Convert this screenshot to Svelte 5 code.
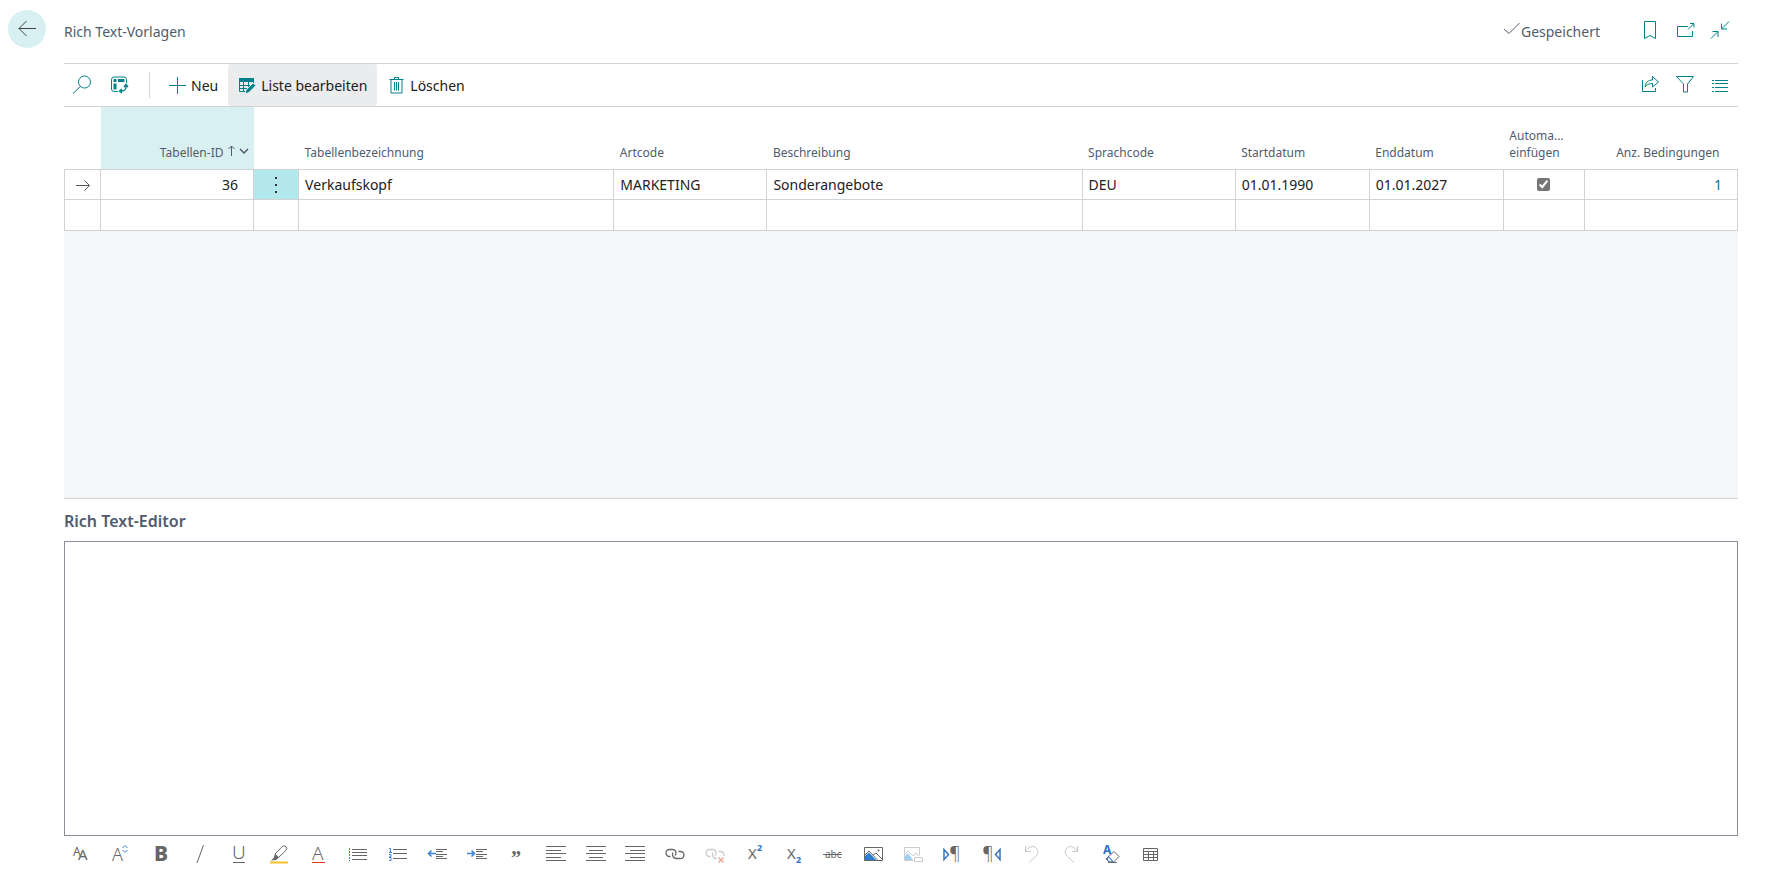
<script>
  let saved = $state(true);
  let autoInsert = $state(true);
  let content = $state('');

  const row = {
    id: '36',
    name: 'Verkaufskopf',
    type: 'MARKETING',
    description: 'Sonderangebote',
    language: 'DEU',
    start: '01.01.1990',
    end: '01.01.2027',
    conditions: '1'
  };

  const lines = (list, color = '#666') =>
    list.map(([x1, x2, y]) => `<path d="M${x1} ${y}.5H${x2}" stroke="${color}"/>`).join('');

  const link =
    '<path d="M5.5 12.5h-1A3.5 3.5 0 0 1 1 9a3.5 3.5 0 0 1 3.500-3.500h3A3.500 3.500 0 0 1 11 9c0 1-.4 1.900-1.100 2.500M8 8.500A3 3 0 0 0 7.500 10a4 4 0 0 0 3.500 4.500h4A3.500 3.500 0 0 0 19 11a3.500 3.500 0 0 0-3.500-3.500h-2" stroke-width="1.3"/>';

  const tools = [
    { label: 'Schriftart', art: '<text x="2" y="12" font-size="12">A</text><text x="7" y="16" font-size="15">A</text>' },
    { label: 'Schriftgrad', art: '<text x="2" y="17" font-size="18" class="thin">A</text><path d="M12.500 4 15 1.500 17.500 4M12.500 6 15 8.500 17.500 6" stroke="#3b82d6"/>' },
    { label: 'Fett', art: '<text x="4" y="17" font-size="21" class="heavy">B</text>' },
    { label: 'Kursiv', art: '<path d="M13.500 1 7 19"/>' },
    { label: 'Unterstrichen', art: '<text x="3" y="15" font-size="19" class="thin">U</text><path d="M4 18.500h12"/>' },
    { label: 'Texthervorhebung', art: '<path d="M6 10 13 2.800a2.600 2.600 0 0 1 4 3.600L9.500 13.500"/><path d="m6 9.500 4 4-3 2.500-5 .5 3-3Z" fill="#666" stroke="none"/><path d="M1 18.500h18" stroke="#fbc02d" stroke-width="2"/>' },
    { label: 'Schriftfarbe', art: '<text x="4" y="16" font-size="19" class="thin">A</text><path d="M4 18.500h13" stroke="#e23c22"/>' },
    { label: 'Aufzählung', art: lines([[4, 19, 5], [4, 19, 8], [4, 19, 11], [4, 19, 15]]) + '<path d="M1.500 4v13" stroke="#3b82d6" stroke-dasharray="2 1"/>' },
    { label: 'Nummerierung', art: lines([[5, 19, 5], [5, 19, 9], [5, 19, 14]]) + '<path d="M1 4.500h1.500v4M1 8.500h3M1 10.500h2v2H1.500M1 13.500h2v3H1" stroke="#3b82d6"/>' },
    { label: 'Einzug verkleinern', art: lines([[9, 20, 5], [9, 16, 7], [9, 20, 10], [9, 16, 12], [9, 20, 14]]) + '<path d="M9 9.500H2M4.500 6.500l-3 3 3 3" stroke="#3b82d6" stroke-width="1.500"/>' },
    { label: 'Einzug vergrößern', art: lines([[9, 20, 5], [9, 16, 7], [9, 20, 10], [9, 16, 12], [9, 20, 14]]) + '<path d="M0 9.500h7M4.500 6.500l3 3-3 3" stroke="#3b82d6" stroke-width="1.500"/>' },
    { label: 'Zitat', art: '<text x="5" y="21" font-size="20" class="quote">”</text>' },
    { label: 'Linksbündig', art: lines([[0, 20, 2], [0, 15, 6], [0, 20, 9], [0, 15, 13], [0, 20, 16]]) },
    { label: 'Zentriert', art: lines([[0, 20, 2], [3, 17, 6], [0, 20, 9], [3, 17, 13], [0, 20, 16]]) },
    { label: 'Rechtsbündig', art: lines([[0, 20, 2], [5, 20, 6], [0, 20, 9], [5, 20, 13], [0, 20, 16]]) },
    { label: 'Link einfügen', art: link },
    { label: 'Link entfernen', off: true, art: `<g stroke="#ccc">${link}</g><path d="M12 12h8v8h-8Z" fill="#fff" stroke="none"/><path d="m13.500 13.500 5 5m0-5-5 5" stroke="#f0a89c" stroke-width="1.500"/>` },
    { label: 'Hochgestellt', art: '<text x="4" y="15" font-size="15">X</text><text x="13" y="7" font-size="9" class="blue">2</text>' },
    { label: 'Tiefgestellt', art: '<text x="3" y="15" font-size="15">X</text><text x="12" y="19" font-size="9" class="blue">2</text>' },
    { label: 'Durchgestrichen', art: '<text x="2" y="14" font-size="10">abc</text><path d="M0 10.500h19"/>' },
    { label: 'Bild einfügen', art: '<path d="M1.500 3.500h18v13h-18Z"/><path d="M2 16v-4l4-3.500L13 16Z" fill="#2b7cd3" stroke="none"/><path d="m2 11 4-4 8.500 9M10 11l3-2 6 6"/><circle cx="15.500" cy="6.500" r="1" fill="#666" stroke="none"/>' },
    { label: 'Alternativtext', off: true, art: '<g stroke="#ccc"><path d="M10 16.500H1.500v-13h15V11"/><path d="M2 16v-4l3-3 5 7Z" fill="#9fd0f5" stroke="none"/><path d="m2 10 3-3 5 5 3-3 3 3"/><path d="M11.500 13.500h8v4h-8Z" fill="#fff"/></g>' },
    { label: 'Von links nach rechts', art: '<path d="M2 5.500v10l4.500-5Z" stroke="#3b74c4" stroke-width="1.500"/><text x="7" y="16" font-size="18" class="thin">¶</text>' },
    { label: 'Von rechts nach links', art: '<text x="0" y="16" font-size="18" class="thin">¶</text><path d="M18 5.500v10l-4.500-5Z" stroke="#3b74c4" stroke-width="1.500"/>' },
    { label: 'Rückgängig', off: true, art: '<path d="M4.500 2v5.500H10M4.500 7.500C7 3 12 1 15 4s2 6-.5 8.500L8 18.500" stroke="#c8c8c8"/>' },
    { label: 'Wiederholen', off: true, art: '<path d="M16.500 2v5.500H11M16.500 7.500C14 3 9 1 6 4s-2 6 .5 8.500l6.500 6" stroke="#c8c8c8"/>' },
    { label: 'Formatierung löschen', art: '<text x="2" y="10" font-size="12" class="blue">A</text><path d="m13 7.500 5 5-5.500 5.500H8L5 15Z" fill="#fff"/><path d="m7.500 12.500 4.500 5M6 15l2-2 4 5H8Z" stroke="#3b82d6"/><path d="M7 18.500h9"/>' },
    { label: 'Tabelle einfügen', art: '<path d="M3.500 4.500h14v12h-14ZM3.500 7.500h14M3.500 10.500h14M3.500 13.500h14M8.500 7v9M13.500 7v9"/>' }
  ];
</script>

<div class="page">
  <header class="top">
    <button class="back" aria-label="Zurück">
      <svg width="20" height="20" viewBox="0 0 20 20"><path d="M19 9.500H2M9.500 2 2 9.500 9.500 17" /></svg>
    </button>
    <h1>Rich Text-Vorlagen</h1>
    {#if saved}
      <span class="saved">
        <svg width="18" height="20" viewBox="0 0 18 20"><path d="m1 9 5 4.500L16.500 3" /></svg>Gespeichert
      </span>
    {/if}
    <div class="icons">
      <button aria-label="Lesezeichen"><svg width="20" height="20" viewBox="0 0 20 20"><path d="M4.500 1.500h11v17L10 15.500l-5.500 3Z" /></svg></button>
      <button aria-label="In neuem Fenster öffnen"><svg width="20" height="20" viewBox="0 0 20 20"><path d="M13 6.500H2.500v10h15V11M13 9.500 18.500 4M15 3.500h4v4" /></svg></button>
      <button aria-label="Verkleinern"><svg width="20" height="20" viewBox="0 0 20 20"><path d="M19 1.500 11.500 9M11.500 3.500V9H17M1 18.500 8 11.500M2.500 11.500H8V17" /></svg></button>
    </div>
  </header>

  <main>
    <nav class="actions" aria-label="Aktionen">
      <button class="tool" aria-label="Suchen"><svg width="20" height="20" viewBox="0 0 20 20"><circle cx="12.500" cy="7" r="6" /><path d="M8.500 11.500 1 18.500" /></svg></button>
      <button class="tool" aria-label="Analysieren">
        <svg width="20" height="20" viewBox="0 0 20 20">
          <path d="M9 16.500H5A2.500 2.500 0 0 1 2.500 14V4.500A2.500 2.500 0 0 1 5 2h10a2.500 2.500 0 0 1 2.500 2.500V8" />
          <path d="M4.500 4h3v3h-3ZM9 4h6.500v3H9ZM4.500 8.500h3v6h-3Z" fill="currentColor" stroke="none" />
          <path d="M17 10.500V12a4 4 0 0 1-4 4h-2M15 12l2-2.500 2 2.500M13 14l-2.500 2 2.500 2" stroke-width="1.500" />
        </svg>
      </button>
      <span class="divider"></span>
      <button class="action"><svg width="20" height="20" viewBox="0 0 20 20"><path d="M10.500 2v17M2 10.500h17" /></svg><span>Neu</span></button>
      <button class="action active" aria-pressed="true">
        <svg width="20" height="20" viewBox="0 0 20 20">
          <path d="M2 3h15v4H2Z" fill="currentColor" stroke="none" />
          <path d="M2.500 7v9.500H9M2 10.500h11M2 13.500h8M6.500 7v9.500M11.500 7v5M16.500 6v2" />
          <path d="m16 8 3 2.500-7 7-4 1.500 1-4Z" fill="currentColor" stroke="#ebecee" />
        </svg><span>Liste bearbeiten</span>
      </button>
      <button class="action"><svg width="20" height="20" viewBox="0 0 20 20"><path d="M3.500 4.500h14M8.500 4V2.500h4V4M5 4.500v13.500h11V4.500M8.500 7v8.500M10.500 7v8.500M12.500 7v8.500" /></svg><span>Löschen</span></button>
      <div class="icons">
        <button aria-label="Teilen"><svg width="20" height="20" viewBox="0 0 20 20"><path d="M2.500 6v11.500h13V14M5 13c.5-4.500 3-7 7.500-7V2.500l6 5.500-6 5V9.500C9 9.500 7 10.500 5 13Z" /></svg></button>
        <button aria-label="Filter"><svg width="20" height="20" viewBox="0 0 20 20"><path d="M1.500 2.500h17L12.500 10v8H8.500v-8Z" /></svg></button>
        <button aria-label="Listenansicht"><svg width="20" height="20" viewBox="0 0 20 20"><path d="M2 6.500h2M5 6.500h13M2 9.500h2M5 9.500h13M2 13.500h2M5 13.500h13M2 17.500h2M5 17.500h13" /></svg></button>
      </div>
    </nav>

    <section class="list">
      <table>
        <colgroup>
          <col class="c-mark" /><col class="c-mid" /><col class="c-menu" /><col class="c-wide" /><col class="c-mid" />
          <col class="c-wide" /><col class="c-mid" /><col class="c-date" /><col class="c-date" /><col class="c-check" /><col class="c-mid" />
        </colgroup>
        <thead>
          <tr>
            <th aria-label="Auswahl"></th>
            <th class="sorted num">
              Tabellen-ID
              <svg width="22" height="12" viewBox="0 0 22 12"><path d="M4.500 11V1M1.500 4l3-3 3 3" /><path d="m13 4 4 4 4-4" stroke-width="1.500" /></svg>
            </th>
            <th aria-label="Menü"></th>
            <th>Tabellenbezeichnung</th>
            <th>Artcode</th>
            <th>Beschreibung</th>
            <th>Sprachcode</th>
            <th>Startdatum</th>
            <th>Enddatum</th>
            <th>Automa...<br />einfügen</th>
            <th class="num">Anz. Bedingungen</th>
          </tr>
        </thead>
        <tbody>
          <tr>
            <td class="mid"><svg width="16" height="16" viewBox="0 0 16 16"><path d="M1 8.500h13M9.500 3.500l5 5-5 5" /></svg></td>
            <td class="num">{row.id}</td>
            <td class="mid menu">
              <button aria-label="Weitere Optionen"><svg width="4" height="18" viewBox="0 0 4 18"><path d="M1 1h2v2H1ZM1 8h2v2H1ZM1 15h2v2H1Z" fill="#333" stroke="none" /></svg></button>
            </td>
            <td>{row.name}</td>
            <td>{row.type}</td>
            <td>{row.description}</td>
            <td>{row.language}</td>
            <td>{row.start}</td>
            <td>{row.end}</td>
            <td class="mid"><input type="checkbox" aria-label="Automatisch einfügen" bind:checked={autoInsert} /></td>
            <td class="num"><a href="#bedingungen">{row.conditions}</a></td>
          </tr>
          <tr class="blank">
            {#each Array(11) as _}<td></td>{/each}
          </tr>
        </tbody>
      </table>
    </section>

    <label class="caption" for="editor">Rich Text-Editor</label>
    <textarea id="editor" bind:value={content}></textarea>

    <div class="format" role="toolbar" aria-label="Formatierung">
      {#each tools as tool}
        <button aria-label={tool.label} disabled={tool.off}>
          <svg width="20" height="20" viewBox="0 0 20 20">{@html tool.art}</svg>
        </button>
      {/each}
    </div>
  </main>
</div>

<style>
  :global(body) {
    margin: 0;
    background: #fff;
  }

  .page {
    box-sizing: border-box;
    min-height: 100vh;
    display: flex;
    flex-direction: column;
    padding: 0 52px 0 8px;
    font-family: "Noto Sans", "Open Sans", sans-serif;
    font-size: 14px;
    line-height: 20px;
    color: #212121;
  }

  button {
    display: flex;
    align-items: center;
    justify-content: center;
    padding: 0;
    border: 0;
    background: none;
    font: inherit;
    color: inherit;
    cursor: pointer;
  }

  svg {
    display: block;
    flex: none;
    overflow: visible;
    fill: none;
    stroke: currentColor;
    stroke-width: 1;
  }

  .top {
    display: flex;
    align-items: center;
    height: 63px;
    color: #505c6d;
  }

  .back {
    width: 38px;
    height: 38px;
    margin: 0 18px 6px 0;
    border-radius: 50%;
    background: #d9f0f2;
    color: #444;
  }

  h1 {
    margin: 0;
    font-size: 14px;
    font-weight: 400;
  }

  .saved {
    display: flex;
    align-items: center;
    margin-left: auto;
    margin-right: 40px;
  }

  .saved svg {
    margin-bottom: 4px;
  }

  .icons {
    display: flex;
    gap: 15px;
    margin-bottom: 3px;
    padding-right: 8px;
    color: #00828a;
  }

  main {
    flex: 1;
    display: flex;
    flex-direction: column;
    margin-left: 56px;
  }

  .actions {
    display: flex;
    align-items: center;
    height: 42px;
    border-top: 1px solid #d0d2d5;
    border-bottom: 1px solid #d0d2d5;
  }

  .actions svg {
    color: #00828a;
  }

  .tool {
    width: 38px;
    height: 42px;
  }

  .tool:first-child {
    width: 36px;
  }

  .divider {
    width: 1px;
    height: 26px;
    margin: 0 8px 0 11px;
    background: #d0d2d5;
  }

  .action {
    height: 42px;
    gap: 4px;
    padding: 0 10px 0 9px;
  }

  .action span {
    padding-top: 2px;
  }

  .active {
    background: #ebecee;
    border-radius: 3px;
  }

  .actions .icons {
    margin-left: auto;
  }

  .list {
    flex: 1 1 390px;
    background: #f5f6f8;
    border-bottom: 1px solid #d0d2d5;
  }

  table {
    width: 100%;
    table-layout: fixed;
    border-collapse: collapse;
    background: #fff;
  }

  .c-mark { width: 36px; }
  .c-menu { width: 45px; }
  .c-mid { width: 153px; }
  .c-wide { width: 315px; }
  .c-date { width: 134px; }
  .c-check { width: 81px; }

  th {
    height: 54px;
    padding: 0 6px 8px;
    text-align: left;
    vertical-align: bottom;
    font-size: 12px;
    line-height: 17px;
    font-weight: 400;
    color: #505c6d;
    white-space: nowrap;
  }

  th.num {
    padding-right: 18px;
  }

  th.sorted {
    padding-right: 5px;
    background: #d9f0f2;
  }

  th svg {
    display: inline-block;
  }

  td {
    height: 28px;
    padding: 1px 6px 0;
    border: 1px solid #d0d2d5;
  }

  .blank td {
    height: 29px;
  }

  .num {
    text-align: right;
  }

  td.num {
    padding-right: 15px;
  }

  td.mid {
    padding: 0;
    text-align: center;
  }

  .mid svg {
    margin: 0 auto;
    color: #555;
  }

  td.menu {
    background: #b2e8eb;
  }

  .menu button {
    width: 100%;
  }

  td a {
    color: #00739c;
    text-decoration: none;
  }

  input {
    display: block;
    width: 13px;
    height: 13px;
    margin: 0 auto;
    accent-color: #757575;
  }

  .caption {
    height: 42px;
    font-size: 16px;
    line-height: 44px;
    font-weight: 600;
    color: #505c6d;
  }

  textarea {
    flex: 1 1 295px;
    box-sizing: border-box;
    width: 100%;
    padding: 8px;
    border: 1px solid #8a8f9c;
    border-radius: 0;
    outline: 0;
    resize: none;
    font: inherit;
  }

  .format {
    display: grid;
    grid-template-columns: repeat(28, 1fr);
    max-width: 1109px;
    height: 36px;
    margin-left: -3px;
    color: #666;
  }

  .format button:disabled {
    cursor: default;
  }

  .format :global(text) {
    fill: #666;
    stroke: none;
  }

  .format :global(.thin) {
    font-weight: 300;
  }

  .format :global(.quote) {
    font-family: "Liberation Serif", serif;
    font-weight: 700;
  }

  .format :global(.heavy) {
    font-weight: 800;
  }

  .format :global(.blue) {
    fill: #2b74cc;
    font-weight: 700;
  }
</style>
